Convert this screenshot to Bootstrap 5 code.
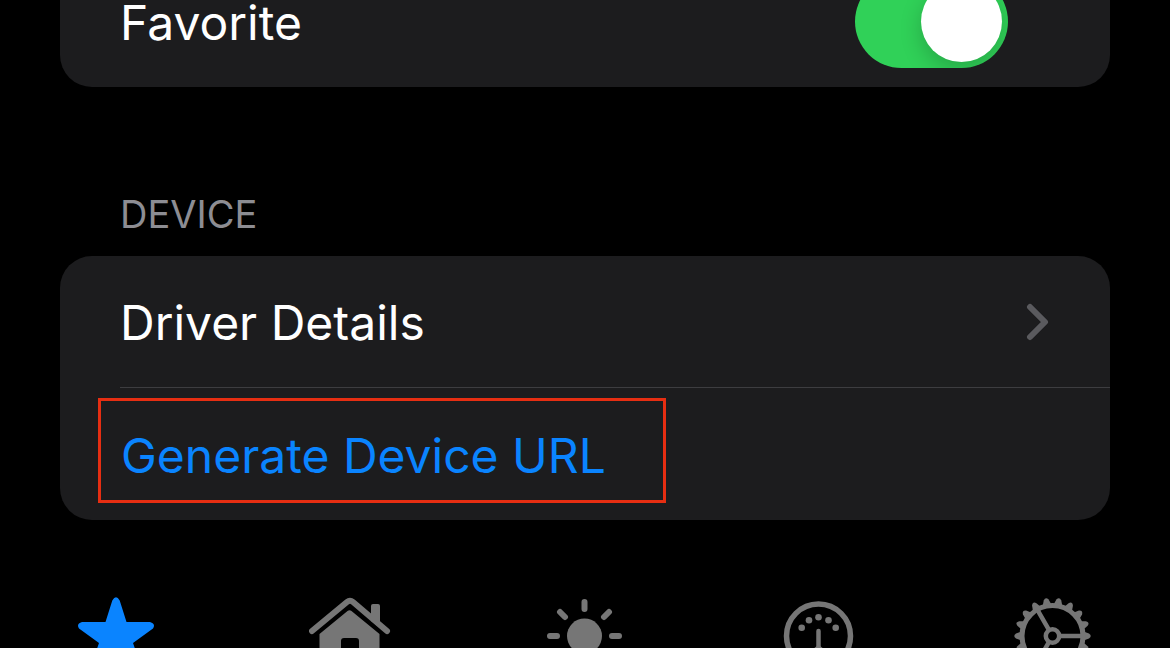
<!DOCTYPE html>
<html lang="en" data-bs-theme="dark">
<head>
<meta charset="utf-8">
<meta name="viewport" content="width=device-width, initial-scale=1">
<title>Device settings</title>
<link href="https://cdn.jsdelivr.net/npm/bootstrap@5.3.0/dist/css/bootstrap.min.css" rel="stylesheet">
<style>
  body { background: #000; font-family: Inter, "Liberation Sans", sans-serif; }
  .settings { padding: 0 60px; }
  .panel { background: #1c1c1e; border-radius: 32px; }
  .panel-scrolled { margin-top: -44px; }
  .item { min-height: 131px; padding: 3px 61px 0 60px; font-size: 48px; line-height: 40px; color: #fff; }
  .item-switch { padding: 0 102px 0 60px; }
  .item-switch label { padding-top: 2px; }
  .divider { height: 1px; margin-left: 60px; background: #3d3d40; }
  .section-title { margin: 103px 60px 18px; font-size: 38px; line-height: 48px; font-weight: 400; color: #8d8d93; }
  .toggle.form-check-input { width: 153px; height: 93px; margin: 0; padding: 6px; border: 0; border-radius: 47px; background: #65656a; overflow: hidden; display: flex; }
  .toggle.form-check-input:checked { background: #30d158; justify-content: flex-end; }
  .toggle::before { content: ""; width: 81px; height: 81px; border-radius: 50%; background: #fff; box-shadow: 0 8px 22px rgba(0,0,0,.2); }
  .action { margin: 10px 0 17px 38px; padding: 35px 57px 24px 20px; border: 3px solid #e62e12; background: none; font-size: 48px; line-height: 40px; color: #0a84ff; }
  .tabs { margin-top: 70px; color: #767676; }
  .tabs a { color: inherit; }
  .tabs a.active { color: #0a84ff; }
  .tabs svg { width: 84px; height: 84px; }
</style>
</head>
<body class="vh-100 overflow-hidden">
<main class="settings">
  <section class="panel panel-scrolled">
    <div class="item item-switch d-flex align-items-center justify-content-between">
      <label for="favorite">Favorite</label>
      <input class="toggle form-check-input" type="checkbox" role="switch" id="favorite" checked>
    </div>
  </section>
  <h2 class="section-title">DEVICE</h2>
  <section class="panel">
    <a href="#driver" class="item d-flex align-items-center justify-content-between text-decoration-none">
      <span>Driver Details</span>
      <svg width="23" height="40" viewBox="0 0 23 40" fill="none" stroke="#5a5a5e" stroke-width="6" stroke-linecap="round" stroke-linejoin="round" aria-hidden="true"><path d="M4 4L19 19L4 34"/></svg>
    </a>
    <div class="divider"></div>
    <div class="d-flex">
      <button type="button" class="action text-nowrap">Generate Device URL</button>
    </div>
  </section>
</main>
<nav class="tabs row row-cols-5 g-0 text-center" aria-label="Main">
  <a href="#favorites" class="col active" aria-label="Favorites">
    <svg viewBox="0 0 84 84" fill="currentColor"><path d="M30.5 32L37.3 10.5Q41 4 44.7 10.5L51.5 32H75Q81 34 78 38.5L58 53L66 76Q65 81 60 79L41 65L22 79Q17 81 16 76L24 53L4 38.5Q1 34 7 32Z"/></svg>
  </a>
  <a href="#home" class="col" aria-label="Home">
    <svg viewBox="0 0 84 84" fill="currentColor"><path d="M3 41L38 12Q41 9.500 44 12L78 41" fill="none" stroke="currentColor" stroke-width="6" stroke-linecap="round"/><path d="M62 31V16Q62 14 64 14H69Q71 14 71 16V38Z"/><path d="M10.500 44L38.500 21Q40.500 19.500 42.500 21L70.500 44V78H50V51Q50 48 47 48H35Q32 48 32 51V78H10.500Z"/></svg>
  </a>
  <a href="#lights" class="col" aria-label="Lights">
    <svg viewBox="0 0 84 84" fill="currentColor"><circle cx="41.500" cy="46" r="17.500"/><path d="M41.500 12V19M7 46H14M69 46H76M17 22L22 27M66 22L61 27M17 70L22 65M66 70L61 65M41.500 73V80" stroke="currentColor" stroke-width="6" stroke-linecap="round"/></svg>
  </a>
  <a href="#sensors" class="col" aria-label="Sensors">
    <svg viewBox="0 0 84 84" fill="currentColor"><circle cx="41.500" cy="46" r="32" fill="none" stroke="currentColor" stroke-width="5.500"/><circle cx="24.700" cy="37.700" r="3.300"/><circle cx="32" cy="30.300" r="3.300"/><circle cx="41.500" cy="27.300" r="3.300"/><circle cx="51.500" cy="30.300" r="3.300"/><circle cx="58.700" cy="37.700" r="3.300"/><path d="M41.500 41V60" stroke="currentColor" stroke-width="4.500" stroke-linecap="round"/><circle cx="41.500" cy="61" r="5"/></svg>
  </a>
  <a href="#settings" class="col" aria-label="Settings">
    <svg viewBox="0 0 84 84" fill="currentColor">
      <defs>
        <path id="tooth" d="M31 -4.500L36.500 -2.500Q40 0 36.500 2.500L31 4.500Z"/>
        <g id="teeth"><use href="#tooth"/><use href="#tooth" transform="rotate(20)"/><use href="#tooth" transform="rotate(40)"/><use href="#tooth" transform="rotate(60)"/><use href="#tooth" transform="rotate(80)"/><use href="#tooth" transform="rotate(100)"/></g>
      </defs>
      <g transform="translate(41.500 46)">
        <use href="#teeth"/><use href="#teeth" transform="rotate(120)"/><use href="#teeth" transform="rotate(240)"/>
        <circle r="30.500" fill="none" stroke="currentColor" stroke-width="5"/>
        <circle r="6.700" fill="none" stroke="currentColor" stroke-width="4.500"/>
        <path d="M8 0H29M-4 -6.900L-14.500 -25.100M-4 6.900L-14.500 25.100" stroke="currentColor" stroke-width="4.500"/>
      </g>
    </svg>
  </a>
</nav>
<script src="https://cdn.jsdelivr.net/npm/bootstrap@5.3.0/dist/js/bootstrap.bundle.min.js"></script>
</body>
</html>
